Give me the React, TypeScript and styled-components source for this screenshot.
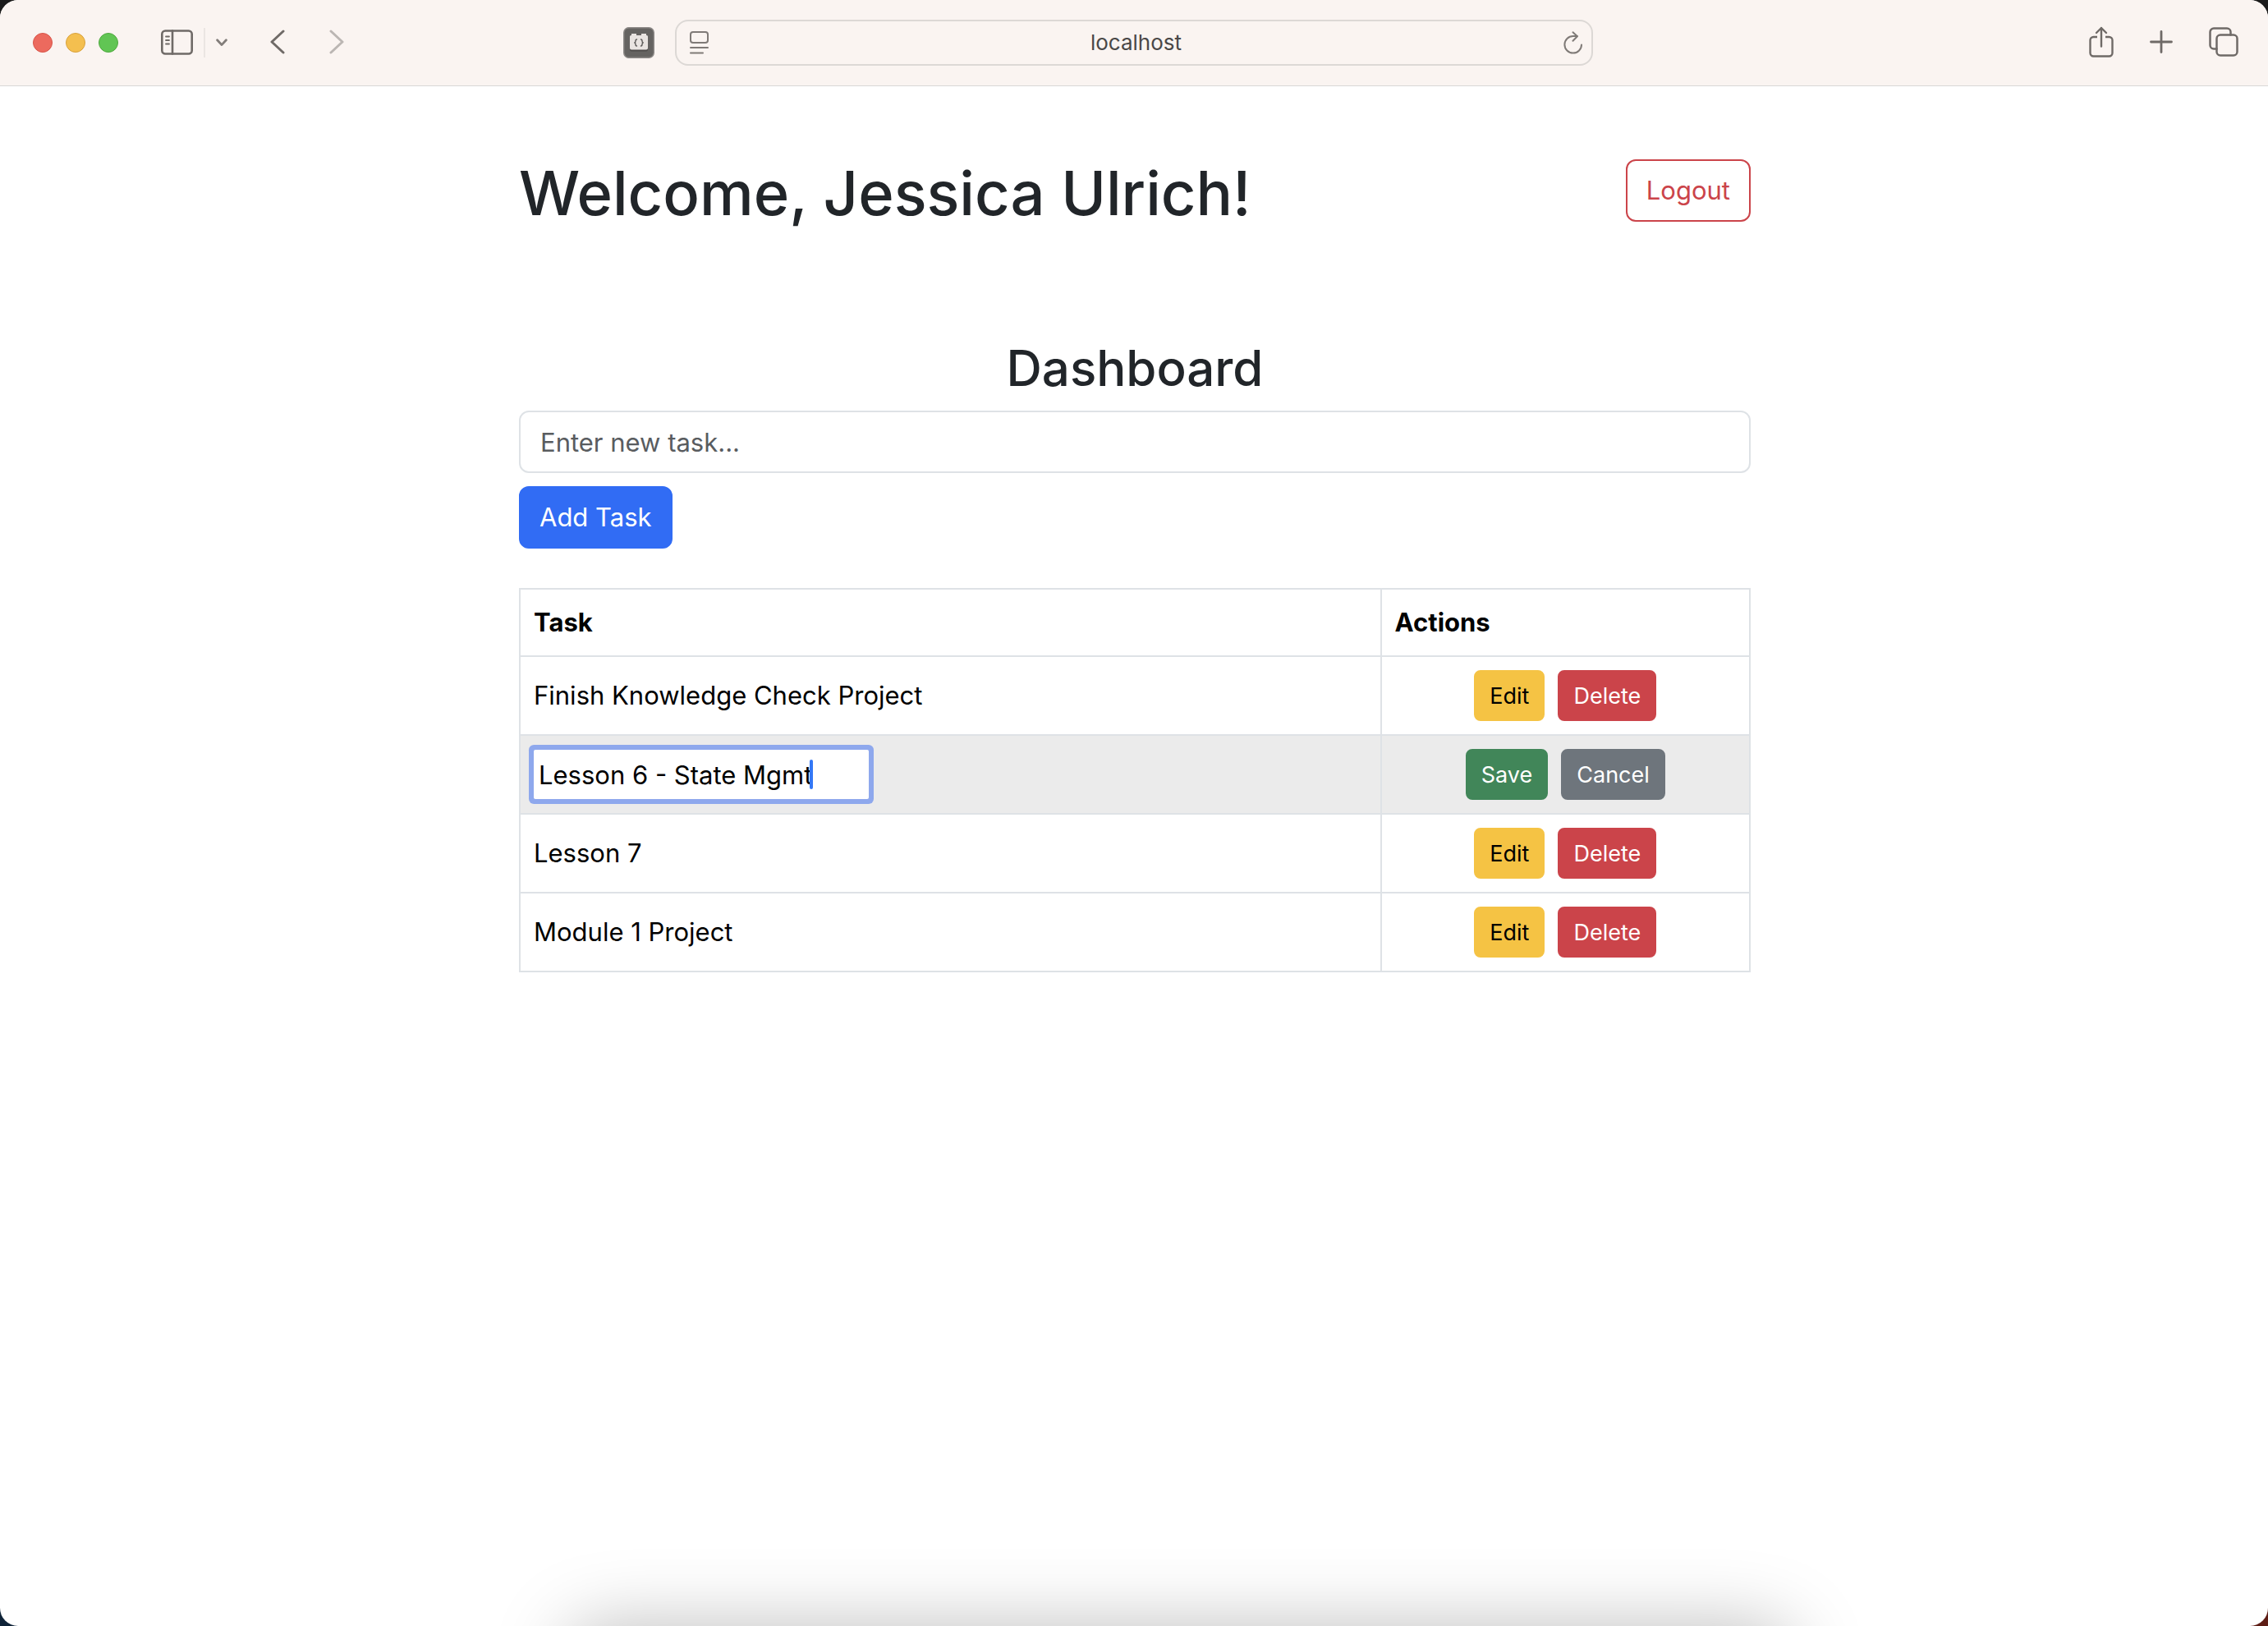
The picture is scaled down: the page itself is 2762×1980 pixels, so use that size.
import React, { useState } from "react";
import styled, { createGlobalStyle, css } from "styled-components";

const sans = `Inter, "Liberation Sans", sans-serif`;

const GlobalStyle = createGlobalStyle`
  *, *::before, *::after { box-sizing: border-box; }
  body {
    margin: 0;
    font-family: ${sans};
    font-size: 32px;
    line-height: 48px;
    color: #212529;
    background:
      linear-gradient(#1b1b1b, #1b1b1b) top / 100% 50% no-repeat,
      linear-gradient(90deg, #0f2338 50%, #5e1d15 50%);
  }
  button, input { font-family: inherit; margin: 0; }
`;

/* ---------- browser window ---------- */

const BrowserWindow = styled.div`
  position: relative;
  display: flex;
  flex-direction: column;
  min-height: 100vh;
  overflow: hidden;
  background: #fff;
  border-radius: 22px;
`;

const Toolbar = styled.header`
  display: grid;
  grid-template-columns: minmax(0, 1fr) minmax(0, 1118px) minmax(0, 1fr);
  align-items: center;
  height: 105px;
  background: #faf4f1;
  border-bottom: 1px solid #d9d7d6;
`;

const ToolbarStart = styled.div`
  display: flex;
  align-items: center;
  padding: 0 25px 0 40px;
`;

const ToolbarEnd = styled.div`
  display: flex;
  align-items: center;
  justify-content: flex-end;
  gap: 44px;
  padding-right: 36px;
`;

const TrafficLights = styled.div`
  display: flex;
  gap: 16px;
  margin-right: 52px;
`;

const TrafficLight = styled.button<{ $fill: string; $edge: string }>`
  width: 24px;
  height: 24px;
  padding: 0;
  border: 1px solid ${(p) => p.$edge};
  border-radius: 50%;
  background: ${(p) => p.$fill};
`;

const IconButton = styled.button<{ $color?: string; $raised?: boolean }>`
  display: flex;
  padding: ${(p) => (p.$raised ? "0 0 2px" : "0")};
  border: 0;
  background: none;
  color: ${(p) => p.$color ?? "#6f6a67"};

  svg {
    display: block;
    fill: none;
    stroke: currentColor;
    stroke-linecap: round;
    stroke-linejoin: round;
  }
`;

const SidebarGroup = styled.div`
  display: flex;
  align-items: center;
  gap: 13px;
  margin-right: 52px;
`;

const Divider = styled.span`
  width: 2px;
  height: 36px;
  background: #ebe6e3;
`;

const HistoryGroup = styled.div`
  display: flex;
  align-items: center;
  gap: 54px;
  margin-right: auto;
`;

const AddressBar = styled.div`
  display: flex;
  align-items: center;
  height: 56px;
  padding: 0 10px 0 16px;
  border: 2px solid #dcd8d5;
  border-radius: 16px;
`;

const AddressInput = styled.input`
  flex: 1;
  min-width: 0;
  padding: 0;
  border: 0;
  outline: 0;
  background: none;
  color: #4a4847;
  font-size: 26px;
  line-height: 48px;
  text-align: center;
`;

const DockShadow = styled.div`
  position: absolute;
  top: 100%;
  left: 25%;
  right: 21%;
  height: 120px;
  border-radius: 40px;
  box-shadow: 0 0 90px rgba(0, 0, 0, 0.26);
  pointer-events: none;
`;

/* ---------- page ---------- */

const Page = styled.main`
  width: 100%;
  max-width: 1502px;
  margin: 0 auto;
  padding: 79px 0 96px 2px;
`;

const Welcome = styled.div`
  display: flex;
  align-items: flex-start;
  justify-content: space-between;
  margin-bottom: 122px;

  button { margin-top: 10px; }
`;

const Title = styled.h1`
  margin: 0;
  font-size: 74px;
  font-weight: 500;
  line-height: 102px;
`;

const Subtitle = styled.h2`
  margin: 0 0 12px;
  font-size: 60px;
  font-weight: 500;
  line-height: 80px;
  text-align: center;
`;

const tones = {
  primary: css`background: #316cf4; border-color: #316cf4; color: #fff;`,
  outline: css`background: transparent; border-color: #cb444a; color: #cb444a;`,
  warning: css`background: #f5c344; border-color: #f5c344; color: #000;`,
  danger: css`background: #cb444a; border-color: #cb444a; color: #fff;`,
  success: css`background: #418659; border-color: #418659; color: #fff;`,
  secondary: css`background: #6e757c; border-color: #6e757c; color: #fff;`,
};

const Button = styled.button<{ $tone: keyof typeof tones; $small?: boolean }>`
  border: 2px solid;
  ${(p) =>
    p.$small
      ? css`padding: 9px 17px 7px; font-size: 27px; line-height: 42px; border-radius: 8px;`
      : css`padding: 12px 23px; font-size: 31px; line-height: 48px; border-radius: 12px;`}
  ${(p) => tones[p.$tone]}
`;

const TaskForm = styled.form`
  display: flex;
  flex-direction: column;
  align-items: flex-start;
  gap: 16px;
  margin-bottom: 48px;
`;

const TaskInput = styled.input`
  width: 100%;
  padding: 12px 24px;
  border: 2px solid #dee2e6;
  border-radius: 12px;
  outline: 0;
  font-size: 31px;
  line-height: 48px;
  height: 76px;
  color: #212529;

  &::placeholder { color: #595c5f; opacity: 1; }
`;

const TaskTable = styled.table`
  width: 100%;
  table-layout: fixed;
  border-collapse: collapse;
  color: #000;
  font-size: 31px;
`;

const HeadCell = styled.th`
  padding: 16px;
  border: 2px solid #dee2e6;
  font-weight: 700;
  text-align: left;

  &:last-child { width: 30%; }
`;

const Cell = styled.td<{ $editing?: boolean }>`
  height: 96px;
  padding: 0 16px;
  border: 2px solid #dee2e6;
  ${(p) => p.$editing && css`background: #ebebeb;`}
`;

const Actions = styled.div`
  display: flex;
  justify-content: center;
  gap: 16px;
`;

const EditBox = styled.div`
  position: relative;
  width: 408px;
`;

const EditInput = styled.input`
  display: block;
  width: 100%;
  height: 60px;
  padding: 0 4px;
  border: 2px solid #fff;
  outline: 0;
  box-shadow: 0 0 0 6px #8ea8ed;
  border-radius: 2px;
  color: #000;
  font-size: 31px;
  caret-color: transparent;
`;

const Caret = styled.span`
  position: absolute;
  top: 12px;
  left: 336px;
  width: 4px;
  height: 36px;
  border-radius: 2px;
  background: #3478f6;
`;

/* ---------- icons ---------- */

const SidebarIcon = () => (
  <svg width="39" height="31" viewBox="0 0 39 31" strokeWidth="2.6">
    <rect x="1.3" y="1.5" width="36.4" height="28" rx="4" />
    <path d="M14 1.5v28" />
    <path d="M6 8.5h4M6 13h4M6 17.5h4" strokeWidth="1.8" />
  </svg>
);

const ChevronDown = () => (
  <svg width="14" height="10" viewBox="0 0 14 10" strokeWidth="2.8">
    <path d="M1.6 1.8 7 7.6l5.4-5.8" />
  </svg>
);

const BackIcon = () => (
  <svg width="18" height="30" viewBox="0 0 18 30" strokeWidth="3">
    <path d="M16 2 2 15l14 13" />
  </svg>
);

const ForwardIcon = () => (
  <svg width="18" height="30" viewBox="0 0 18 30" strokeWidth="3">
    <path d="M2 2l14 13L2 28" />
  </svg>
);

const ExtensionIcon = () => (
  <svg width="38" height="38" viewBox="0 0 38 38">
    <rect x="0.75" y="0.75" width="36.5" height="36.5" rx="6" fill="#656361" stroke="#8b8886" strokeWidth="1.5" />
    <rect x="8" y="11" width="22" height="18.5" rx="2" fill="#4f4d4b" stroke="none" />
    <path
      d="M8 11.5A1.5 1.5 0 0 1 9.500 10H10V8h6v2h6V8h6v2h.5A1.5 1.5 0 0 1 30 11.500v14a2 2 0 0 1-2 2H10a2 2 0 0 1-2-2z"
      fill="#e9e4e1"
      stroke="none"
    />
    <path
      d="M16.500 15c-1.500 0-1.500.8-1.500 2s-.3 1.700-1.200 2c.9.300 1.200.8 1.200 2s0 2 1.500 2M21.500 15c1.500 0 1.500.8 1.500 2s.3 1.700 1.200 2c-.9.300-1.200.8-1.200 2s0 2-1.500 2"
      stroke="#5b5957"
      strokeWidth="1.4"
    />
  </svg>
);

const PageIcon = () => (
  <svg width="23" height="28" viewBox="0 0 23 28" strokeWidth="2">
    <rect x="1" y="1" width="21" height="13" rx="3" />
    <path d="M1 20h21M1 26.500h15" />
  </svg>
);

const ReloadIcon = () => (
  <svg width="24" height="28" viewBox="0 0 24 28" strokeWidth="2">
    <path d="M22 16.500A10.300 10.300 0 1 1 11.700 6h5" />
    <path d="M11.500 1.300l5.400 4.900-5.400 5.600" />
  </svg>
);

const ShareIcon = () => (
  <svg width="30" height="38" viewBox="0 0 30 38" strokeWidth="2.4">
    <path d="M10 13H5.500a4 4 0 0 0-4 4v15.500a4 4 0 0 0 4 4h19a4 4 0 0 0 4-4V17a4 4 0 0 0-4-4H20" strokeLinecap="butt" />
    <path d="M15 24.500V2M9 8l6-6 6 6" />
  </svg>
);

const PlusIcon = () => (
  <svg width="28" height="28" viewBox="0 0 28 28" strokeWidth="2.8">
    <path d="M14 1.500v25M1.500 14h25" />
  </svg>
);

const TabsIcon = () => (
  <svg width="36" height="36" viewBox="0 0 36 36" strokeWidth="2.500">
    <rect x="9.500" y="9.500" width="25" height="25" rx="4.500" />
    <path d="M9.500 26.500H6a4.500 4.500 0 0 1-4.500-4.500V6A4.500 4.500 0 0 1 6 1.500h16A4.500 4.500 0 0 1 26.500 6v3.500" />
  </svg>
);

/* ---------- app ---------- */

const initialTasks = [
  { id: 1, name: "Finish Knowledge Check Project" },
  { id: 2, name: "Lesson 6 - State Mgmt" },
  { id: 3, name: "Lesson 7" },
  { id: 4, name: "Module 1 Project" },
];

const BrowserToolbar = () => (
  <Toolbar>
    <ToolbarStart>
      <TrafficLights>
        <TrafficLight aria-label="Close" $fill="#ec6a5e" $edge="#d8554a" />
        <TrafficLight aria-label="Minimize" $fill="#f4bf4f" $edge="#d8a13c" />
        <TrafficLight aria-label="Zoom" $fill="#61c554" $edge="#4fa93f" />
      </TrafficLights>
      <SidebarGroup>
        <IconButton aria-label="Show sidebar" $raised><SidebarIcon /></IconButton>
        <Divider />
        <IconButton aria-label="Tab groups" $color="#827d7a"><ChevronDown /></IconButton>
      </SidebarGroup>
      <HistoryGroup>
        <IconButton aria-label="Back" $raised><BackIcon /></IconButton>
        <IconButton aria-label="Forward" $raised $color="#bbb6b3"><ForwardIcon /></IconButton>
      </HistoryGroup>
      <IconButton aria-label="Extension"><ExtensionIcon /></IconButton>
    </ToolbarStart>
    <AddressBar>
      <IconButton aria-label="Page menu" $color="#7f7a77"><PageIcon /></IconButton>
      <AddressInput aria-label="Address" defaultValue="localhost" />
      <IconButton aria-label="Reload" $color="#7f7a77"><ReloadIcon /></IconButton>
    </AddressBar>
    <ToolbarEnd>
      <IconButton aria-label="Share" $raised><ShareIcon /></IconButton>
      <IconButton aria-label="New tab" $raised><PlusIcon /></IconButton>
      <IconButton aria-label="Tab overview" $raised><TabsIcon /></IconButton>
    </ToolbarEnd>
  </Toolbar>
);

export default function App() {
  const [tasks, setTasks] = useState(initialTasks);
  const [editingId, setEditingId] = useState<number | null>(2);
  const [draft, setDraft] = useState("Lesson 6 - State Mgmt");
  const [newTask, setNewTask] = useState("");

  const addTask = (event: React.FormEvent) => {
    event.preventDefault();
    if (!newTask.trim()) return;
    setTasks([...tasks, { id: Date.now(), name: newTask }]);
    setNewTask("");
  };

  const startEdit = (id: number, name: string) => {
    setEditingId(id);
    setDraft(name);
  };

  const save = () => {
    setTasks(tasks.map((t) => (t.id === editingId ? { ...t, name: draft } : t)));
    setEditingId(null);
  };

  return (
    <>
      <GlobalStyle />
      <BrowserWindow>
        <BrowserToolbar />
        <Page>
          <Welcome>
            <Title>Welcome, Jessica Ulrich!</Title>
            <Button $tone="outline">Logout</Button>
          </Welcome>
          <Subtitle>Dashboard</Subtitle>
          <TaskForm onSubmit={addTask}>
            <TaskInput
              aria-label="New task"
              placeholder="Enter new task..."
              value={newTask}
              onChange={(e) => setNewTask(e.target.value)}
            />
            <Button $tone="primary" type="submit">Add Task</Button>
          </TaskForm>
          <TaskTable>
            <thead>
              <tr>
                <HeadCell scope="col">Task</HeadCell>
                <HeadCell scope="col">Actions</HeadCell>
              </tr>
            </thead>
            <tbody>
              {tasks.map(({ id, name }) =>
                id === editingId ? (
                  <tr key={id}>
                    <Cell $editing>
                      <EditBox>
                        <EditInput
                          aria-label="Edit task"
                          value={draft}
                          onChange={(e) => setDraft(e.target.value)}
                        />
                        <Caret />
                      </EditBox>
                    </Cell>
                    <Cell $editing>
                      <Actions>
                        <Button $tone="success" $small onClick={save}>Save</Button>
                        <Button $tone="secondary" $small onClick={() => setEditingId(null)}>Cancel</Button>
                      </Actions>
                    </Cell>
                  </tr>
                ) : (
                  <tr key={id}>
                    <Cell>{name}</Cell>
                    <Cell>
                      <Actions>
                        <Button $tone="warning" $small onClick={() => startEdit(id, name)}>Edit</Button>
                        <Button $tone="danger" $small onClick={() => setTasks(tasks.filter((t) => t.id !== id))}>
                          Delete
                        </Button>
                      </Actions>
                    </Cell>
                  </tr>
                )
              )}
            </tbody>
          </TaskTable>
        </Page>
        <DockShadow />
      </BrowserWindow>
    </>
  );
}
